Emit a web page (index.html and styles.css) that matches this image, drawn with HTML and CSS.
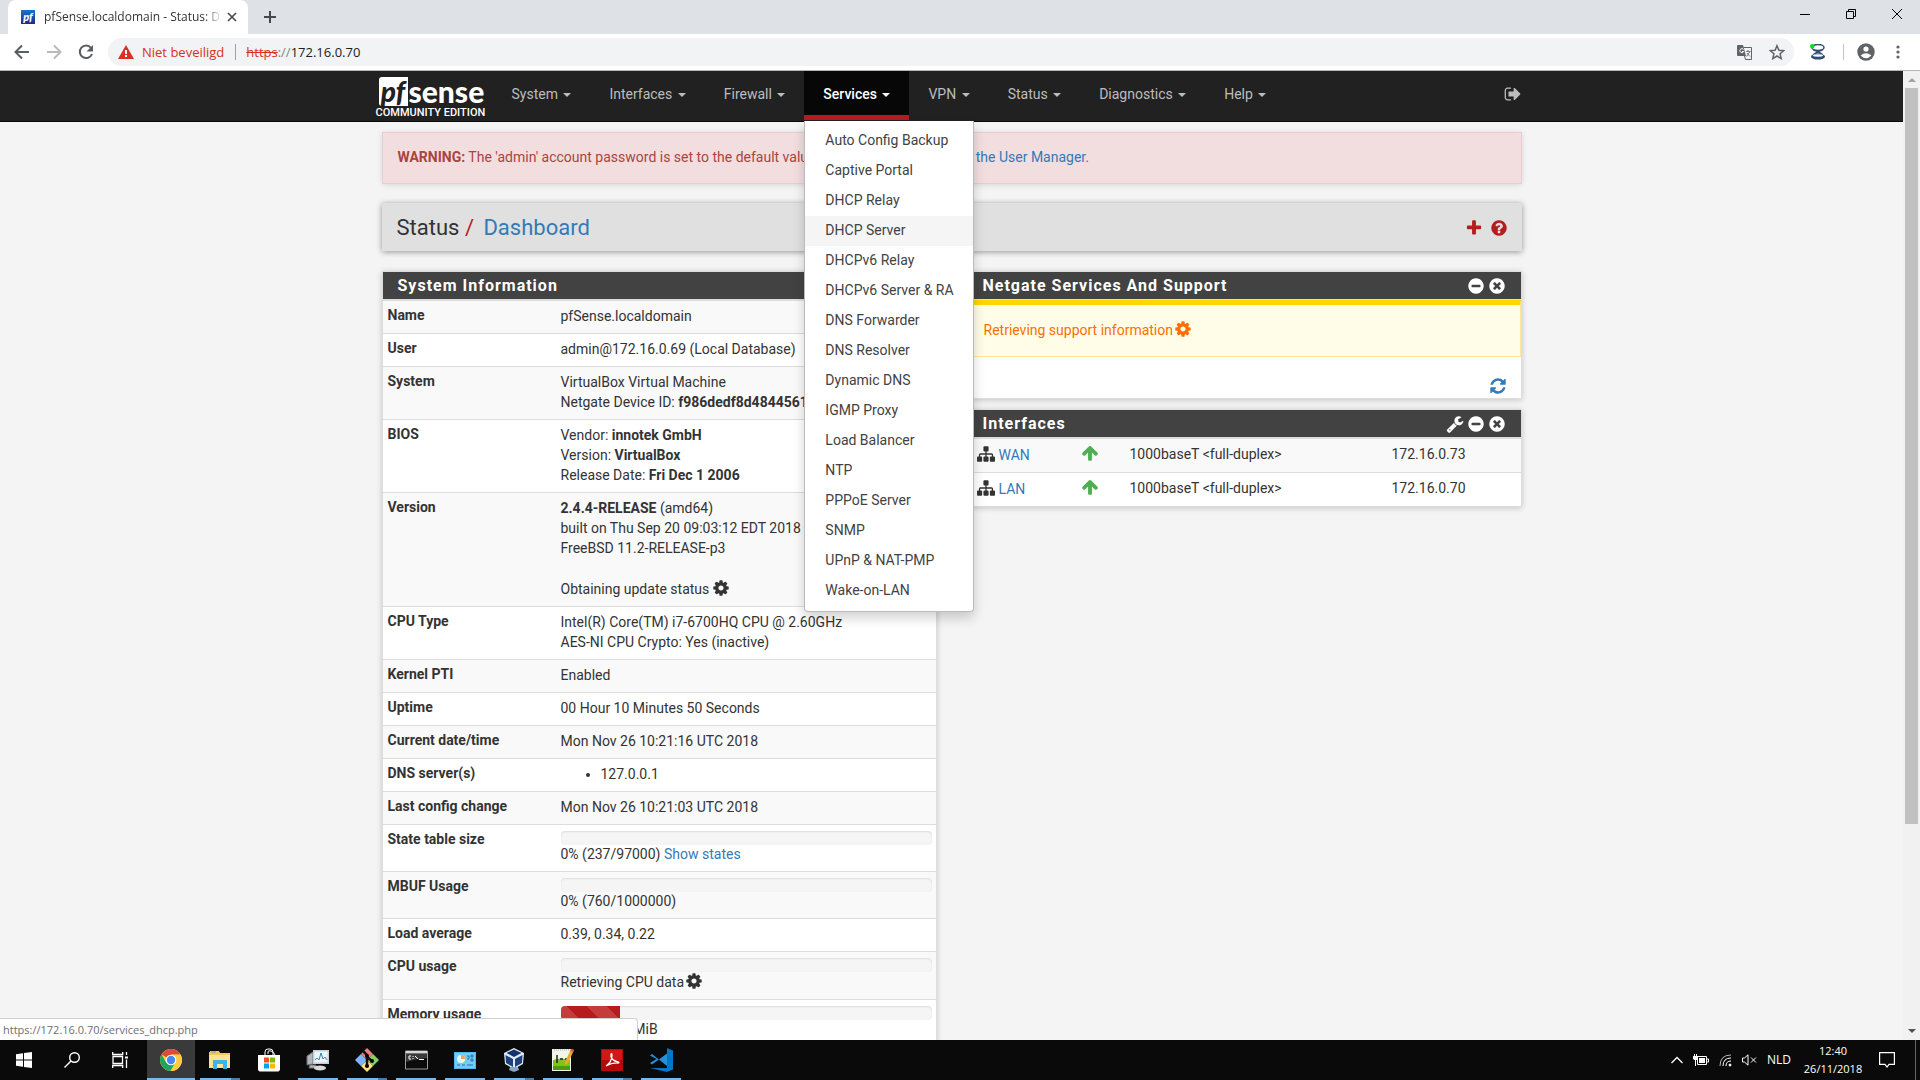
FILE: index.html
```html
<!DOCTYPE html>
<html lang="en">
<head>
<meta charset="utf-8">
<title>pfSense.localdomain - Status: Dashboard</title>
<link rel="stylesheet" href="styles.css">
</head>
<body>
<svg class="sprite" aria-hidden="true">
  <symbol id="cog" viewBox="0 0 1792 1792"><path d="M1152 896q0-106-75-181t-181-75-181 75-75 181 75 181 181 75 181-75 75-181zm512-109v222q0 12-8 23t-20 13l-185 28q-19 54-39 91 35 50 107 138 10 12 10 25t-9 23q-27 37-99 108t-94 71q-12 0-26-9l-138-108q-44 23-91 38-16 136-29 186-7 28-36 28h-222q-14 0-24.5-8.5t-11.5-21.5l-28-184q-49-16-90-37l-141 107q-10 9-25 9-14 0-25-11-126-114-165-168-7-10-7-23 0-12 8-23 15-21 51-66.5t54-70.5q-27-50-41-99l-183-27q-13-2-21-12.5t-8-23.5v-222q0-12 8-23t19-13l186-28q14-46 39-92-40-57-107-138-10-12-10-24 0-10 9-23 26-36 98.5-107.5t94.5-71.5q13 0 26 10l138 107q44-23 91-38 16-136 29-186 7-28 36-28h222q14 0 24.5 8.5t11.5 21.5l28 184q49 16 90 37l142-107q9-9 24-9 13 0 25 10 129 119 165 170 7 8 7 22 0 12-8 23-15 21-51 66.5t-54 70.5q26 50 41 98l183 28q13 2 21 12.5t8 23.5z"/></symbol>
  <symbol id="plus" viewBox="0 0 1792 1792"><path d="M1600 736v192q0 40-28 68t-68 28h-416v416q0 40-28 68t-68 28h-192q-40 0-68-28t-28-68v-416h-416q-40 0-68-28t-28-68v-192q0-40 28-68t68-28h416v-416q0-40 28-68t68-28h192q40 0 68 28t28 68v416h416q40 0 68 28t28 68z"/></symbol>
  <symbol id="question" viewBox="0 0 1792 1792"><path d="M1024 1376v-192q0-14-9-23t-23-9h-192q-14 0-23 9t-9 23v192q0 14 9 23t23 9h192q14 0 23-9t9-23zm256-672q0-88-55.5-163t-138.5-116-170-41q-243 0-371 213-15 24 8 42l132 100q7 6 19 6 16 0 25-12 53-68 86-92 34-24 86-24 48 0 85.5 26t37.5 59q0 38-20 61t-68 45q-63 28-115.5 86.5t-52.5 125.5v36q0 14 9 23t23 9h192q14 0 23-9t9-23q0-19 21.5-49.5t54.5-49.5q32-18 49-28.5t46-35 44.5-48 28-60.5 12.5-81zm384 192q0 209-103 385.5t-279.5 279.5-385.5 103-385.5-103-279.5-279.5-103-385.5 103-385.5 279.5-279.5 385.5-103 385.5 103 279.5 279.5 103 385.5z"/></symbol>
  <symbol id="minus" viewBox="0 0 1792 1792"><path d="M1344 960v-128q0-26-19-45t-45-19h-768q-26 0-45 19t-19 45v128q0 26 19 45t45 19h768q26 0 45-19t19-45zm320-64q0 209-103 385.5t-279.5 279.5-385.5 103-385.5-103-279.5-279.5-103-385.5 103-385.5 279.5-279.5 385.5-103 385.5 103 279.5 279.5 103 385.5z"/></symbol>
  <symbol id="times" viewBox="0 0 1792 1792"><path d="M1277 1122q0-26-19-45l-181-181 181-181q19-19 19-45 0-27-19-46l-90-90q-19-18-46-18-26 0-45 18l-181 181-181-181q-19-18-45-18-27 0-46 18l-90 90q-19 19-19 46 0 26 19 45l181 181-181 181q-19 19-19 45 0 27 19 46l90 90q19 18 46 18 26 0 45-18l181-181 181 181q19 18 45 18 27 0 46-18l90-90q19-19 19-46zm387-226q0 209-103 385.5t-279.5 279.5-385.5 103-385.5-103-279.5-279.5-103-385.5 103-385.5 279.5-279.5 385.5-103 385.5 103 279.5 279.5 103 385.5z"/></symbol>
  <symbol id="wrench" viewBox="0 0 1792 1792"><path d="M448 1472q0-26-19-45t-45-19-45 19-19 45 19 45 45 19 45-19 19-45zm644-420l-682 682q-37 37-90 37-52 0-91-37l-106-108q-38-36-38-90 0-53 38-91l681-681q39 98 114.5 173.5t173.5 114.5zm634-435q0 39-23 106-47 134-164.5 217.5t-258.5 83.5q-185 0-316.5-131.5t-131.5-316.5 131.5-316.5 316.5-131.5q58 0 121.5 16.5t107.5 46.5q16 11 16 28t-16 28l-293 169v224l193 107q5-3 79-48.5t135.5-81 70.5-35.5q15 0 23.5 10t8.5 25z"/></symbol>
  <symbol id="refresh" viewBox="0 0 1792 1792"><path d="M1639 1056q0 5-1 7-64 268-268 434.5t-478 166.5q-146 0-282.5-55t-243.5-157l-129 129q-19 19-45 19t-45-19-19-45v-448q0-26 19-45t45-19h448q26 0 45 19t19 45-19 45l-137 137q71 66 161 102t187 36q134 0 250-65t186-179q11-17 53-117 8-23 30-23h192q13 0 22.5 9.5t9.5 22.5zm25-800v448q0 26-19 45t-45 19h-448q-26 0-45-19t-19-45 19-45l138-138q-148-137-349-137-134 0-250 65t-186 179q-11 17-53 117-8 23-30 23h-199q-13 0-22.5-9.5t-9.5-22.5v-7q65-268 270-434.5t480-166.5q146 0 284 55.5t245 156.5l130-129q19-19 45-19t45 19 19 45z"/></symbol>
  <symbol id="arrow-up" viewBox="0 0 1792 1792"><path d="M1675 971q0 51-37 90l-75 75q-38 38-91 38-54 0-90-38l-294-293v704q0 52-37.5 84.5t-90.5 32.5h-128q-53 0-90.5-32.5t-37.5-84.5v-704l-294 293q-36 38-90 38t-90-38l-75-75q-38-38-38-90 0-53 38-91l651-651q35-37 90-37 54 0 91 37l651 651q37 39 37 91z"/></symbol>
  <symbol id="sitemap" viewBox="0 0 1792 1792"><path d="M1792 1248v320q0 40-28 68t-68 28h-320q-40 0-68-28t-28-68v-320q0-40 28-68t68-28h96v-192h-512v192h96q40 0 68 28t28 68v320q0 40-28 68t-68 28h-320q-40 0-68-28t-28-68v-320q0-40 28-68t68-28h96v-192h-512v192h96q40 0 68 28t28 68v320q0 40-28 68t-68 28h-320q-40 0-68-28t-28-68v-320q0-40 28-68t68-28h96v-192q0-52 38-90t90-38h512v-192h-96q-40 0-68-28t-28-68v-320q0-40 28-68t68-28h320q40 0 68 28t28 68v320q0 40-28 68t-68 28h-96v192h512q52 0 90 38t38 90v192h96q40 0 68 28t28 68z"/></symbol>
  <symbol id="sign-out" viewBox="0 0 1792 1792"><path d="M704 1440q0 4 1 20t.5 26.5-3 23.5-10 19.5-20.5 6.5h-320q-119 0-203.5-84.5t-84.5-203.5v-704q0-119 84.5-203.5t203.5-84.5h320q13 0 22.5 9.5t9.5 22.5q0 4 1 20t.5 26.5-3 23.5-10 19.5-20.5 6.5h-320q-66 0-113 47t-47 113v704q0 66 47 113t113 47h312l11.5 1 11.5 3 8 5.5 7 9 2 13.5zm928-544q0 26-19 45l-544 544q-19 19-45 19t-45-19-19-45v-288h-448q-26 0-45-19t-19-45v-384q0-26 19-45t45-19h448v-288q0-26 19-45t45-19 45 19l544 544q19 19 19 45z"/></symbol>
</svg>

<header class="browser">
  <div class="tabstrip">
    <div class="tab">
      <span class="favicon">pf</span>
      <span class="tab-title">pfSense.localdomain - Status: Dashboard</span>
      <button class="ghost" aria-label="Close tab"><svg width="10" height="10" viewBox="0 0 10 10"><path d="M1 1l8 8M9 1l-8 8" stroke="#45494d" stroke-width="1.600"/></svg></button>
    </div>
    <button class="ghost new-tab" aria-label="New tab"><svg width="12" height="12" viewBox="0 0 12 12"><path d="M6 0v12M0 6h12" stroke="#45494d" stroke-width="2"/></svg></button>
    <div class="window-buttons">
      <button class="ghost" aria-label="Minimize"><svg width="10" height="10" viewBox="0 0 10 10"><path d="M0 5.500h10" stroke="#000"/></svg></button>
      <button class="ghost" aria-label="Restore"><svg width="10" height="10" viewBox="0 0 10 10"><path d="M.5 2.500h7v7h-7zM2.500 2.500v-2h7v7h-2" fill="none" stroke="#000"/></svg></button>
      <button class="ghost" aria-label="Close"><svg width="10" height="10" viewBox="0 0 10 10"><path d="M0 0l10 10M10 0L0 10" stroke="#000"/></svg></button>
    </div>
  </div>
  <div class="toolbar">
    <div class="nav-buttons">
      <button class="ghost" aria-label="Back"><svg width="16" height="16" viewBox="0 0 16 16" fill="none" stroke="#5a5e63" stroke-width="2"><path d="M15 8H2M8 1.500L1.500 8 8 14.500"/></svg></button>
      <button class="ghost" aria-label="Forward"><svg width="16" height="16" viewBox="0 0 16 16" fill="none" stroke="#bababc" stroke-width="2"><path d="M1 8h13M8 1.500L14.500 8 8 14.500"/></svg></button>
      <button class="ghost" aria-label="Reload"><svg width="16" height="16" viewBox="0 0 16 16"><path d="M13 3.800A6.300 6.300 0 1 0 14 10" fill="none" stroke="#5a5e63" stroke-width="2"/><path d="M15 1v6.500H8.500z" fill="#5a5e63"/></svg></button>
    </div>
    <div class="omnibox">
      <svg width="16" height="14" viewBox="0 0 16 14"><path d="M8 0l8 14H0z" fill="#d93025"/><path d="M8 5v4M8 10v2" stroke="#fff" stroke-width="2"/></svg>
      <span class="insecure">Niet beveiligd</span>
      <span class="url"><s>https</s><span class="slashes">://</span>172.16.0.70</span>
      <svg class="translate" width="15" height="15" viewBox="0 0 15 15"><path d="M0 1q0-1 1-1h5l3 11H1q-1 0-1-1z" fill="#5f6368"/><path d="M6.500 2.500h8v12h-6l-1-3.500" fill="none" stroke="#5f6368"/><path d="M6.500 4.500a2 2 0 1 0 .2 2H5" fill="none" stroke="#fff"/><path d="M9 6.500h4.500M11 5v1.500M9.500 11.500l3.500-5M10 8l3 3.500" stroke="#777b80" fill="none"/></svg>
      <svg width="16" height="16" viewBox="0 0 16 16"><path d="M8 1.700l1.900 4.500 4.900.4-3.700 3.200 1.100 4.800L8 12l-4.200 2.600 1.100-4.800L1.200 6.600l4.900-.4z" fill="none" stroke="#5f6368" stroke-width="1.500"/></svg>
    </div>
    <svg width="16" height="16" viewBox="0 0 16 16"><ellipse cx="8" cy="3.500" rx="6" ry="3" fill="#fff" stroke="#2d4c70" stroke-width="1.500"/><path d="M3.500 6q4.500 2 9 0M3.500 10.500q4.500-4 9 0M6 8.300h4" fill="none" stroke="#2d4c70" stroke-width="1.500"/><ellipse cx="8" cy="12.600" rx="7" ry="3" fill="#2d4c70"/><ellipse cx="8" cy="11.500" rx="5" ry="1.200" fill="#fff"/><circle cx="2.200" cy="2.200" r="2.200" fill="#0bdc1c"/></svg>
    <span class="divider"></span>
    <svg width="18" height="18" viewBox="0 0 18 18"><circle cx="9" cy="9" r="8.700" fill="#5f6368"/><circle cx="9" cy="6" r="2.600" fill="#fff"/><path d="M3.600 12.500Q9 8 14.400 12.500 9 18 3.600 12.500" fill="#fff"/></svg>
    <button class="ghost menu-dots" aria-label="Menu"><svg width="4" height="14" viewBox="0 0 4 14" fill="#5f6368"><circle cx="2" cy="2" r="1.600"/><circle cx="2" cy="7" r="1.600"/><circle cx="2" cy="12" r="1.600"/></svg></button>
  </div>
</header>

<div class="viewport">
  <div class="page">
    <nav class="navbar">
      <div class="container navbar-inner">
        <a class="brand" href="#"><span class="brand-name"><span class="brand-pf">pf</span><span class="brand-sense">sense</span></span><span class="brand-edition">COMMUNITY EDITION</span></a>
        <ul class="menu">
          <li><a href="#">System <i class="caret"></i></a></li>
          <li><a href="#">Interfaces <i class="caret"></i></a></li>
          <li><a href="#">Firewall <i class="caret"></i></a></li>
          <li class="open"><a href="#">Services <i class="caret"></i></a>
            <ul class="dropdown">
              <li><a href="#">Auto Config Backup</a></li>
              <li><a href="#">Captive Portal</a></li>
              <li><a href="#">DHCP Relay</a></li>
              <li class="hovered"><a href="#">DHCP Server</a></li>
              <li><a href="#">DHCPv6 Relay</a></li>
              <li><a href="#">DHCPv6 Server &amp; RA</a></li>
              <li><a href="#">DNS Forwarder</a></li>
              <li><a href="#">DNS Resolver</a></li>
              <li><a href="#">Dynamic DNS</a></li>
              <li><a href="#">IGMP Proxy</a></li>
              <li><a href="#">Load Balancer</a></li>
              <li><a href="#">NTP</a></li>
              <li><a href="#">PPPoE Server</a></li>
              <li><a href="#">SNMP</a></li>
              <li><a href="#">UPnP &amp; NAT-PMP</a></li>
              <li><a href="#">Wake-on-LAN</a></li>
            </ul>
          </li>
          <li><a href="#">VPN <i class="caret"></i></a></li>
          <li><a href="#">Status <i class="caret"></i></a></li>
          <li><a href="#">Diagnostics <i class="caret"></i></a></li>
          <li><a href="#">Help <i class="caret"></i></a></li>
        </ul>
        <a class="logout" href="#" aria-label="Logout"><svg class="icon"><use href="#sign-out"/></svg></a>
      </div>
    </nav>

    <main class="container">
      <div class="alert"><strong>WARNING:</strong> The 'admin' account password is set to the default value. <a href="#">Change the password in the User Manager.</a></div>
      <div class="page-header">
        <h1>Status <span class="slash">/</span> <a href="#">Dashboard</a></h1>
        <div class="header-icons">
          <a href="#" aria-label="Add widget"><svg class="icon"><use href="#plus"/></svg></a>
          <a href="#" aria-label="Help"><svg class="icon"><use href="#question"/></svg></a>
        </div>
      </div>

      <div class="columns">
        <section class="panel">
          <div class="panel-heading"><h2>System Information</h2></div>
          <table class="info">
            <tr><th scope="row">Name</th><td>pfSense.localdomain</td></tr>
            <tr><th scope="row">User</th><td>admin@172.16.0.69 (Local Database)</td></tr>
            <tr><th scope="row">System</th><td>VirtualBox Virtual Machine<br>Netgate Device ID: <strong>f986dedf8d4844561</strong></td></tr>
            <tr><th scope="row">BIOS</th><td>Vendor: <strong>innotek GmbH</strong><br>Version: <strong>VirtualBox</strong><br>Release Date: <strong>Fri Dec 1 2006</strong></td></tr>
            <tr><th scope="row">Version</th><td><strong>2.4.4-RELEASE</strong> (amd64)<br>built on Thu Sep 20 09:03:12 EDT 2018<br>FreeBSD 11.2-RELEASE-p3<br><br><span class="busy">Obtaining update status <svg class="icon"><use href="#cog"/></svg></span></td></tr>
            <tr><th scope="row">CPU Type</th><td>Intel(R) Core(TM) i7-6700HQ CPU @ 2.60GHz<br>AES-NI CPU Crypto: Yes (inactive)</td></tr>
            <tr><th scope="row">Kernel PTI</th><td>Enabled</td></tr>
            <tr><th scope="row">Uptime</th><td>00 Hour 10 Minutes 50 Seconds</td></tr>
            <tr><th scope="row">Current date/time</th><td>Mon Nov 26 10:21:16 UTC 2018</td></tr>
            <tr><th scope="row">DNS server(s)</th><td><ul><li>127.0.0.1</li></ul></td></tr>
            <tr><th scope="row">Last config change</th><td>Mon Nov 26 10:21:03 UTC 2018</td></tr>
            <tr><th scope="row">State table size</th><td><div class="progress"></div>0% (237/97000) <a href="#">Show states</a></td></tr>
            <tr><th scope="row">MBUF Usage</th><td><div class="progress"></div>0% (760/1000000)</td></tr>
            <tr><th scope="row">Load average</th><td>0.39, 0.34, 0.22</td></tr>
            <tr><th scope="row">CPU usage</th><td><div class="progress"></div><span class="busy tight">Retrieving CPU data<svg class="icon"><use href="#cog"/></svg></span></td></tr>
            <tr><th scope="row">Memory usage</th><td><div class="progress"><div class="bar" style="width:16%"></div></div>16% of 981 MiB</td></tr>
          </table>
        </section>

        <div class="stack">
          <section class="panel">
            <div class="panel-heading"><h2>Netgate Services And Support</h2>
              <a href="#" aria-label="Collapse"><svg class="icon"><use href="#minus"/></svg></a>
              <a href="#" aria-label="Close"><svg class="icon"><use href="#times"/></svg></a>
            </div>
            <div class="support">Retrieving support information<svg class="icon"><use href="#cog"/></svg></div>
            <div class="panel-foot"><a href="#" aria-label="Refresh"><svg class="icon"><use href="#refresh"/></svg></a></div>
          </section>
          <section class="panel">
            <div class="panel-heading"><h2>Interfaces</h2>
              <a href="#" aria-label="Settings"><svg class="icon"><use href="#wrench"/></svg></a>
              <a href="#" aria-label="Collapse"><svg class="icon"><use href="#minus"/></svg></a>
              <a href="#" aria-label="Close"><svg class="icon"><use href="#times"/></svg></a>
            </div>
            <table class="ifaces">
              <tr><td><span class="if-name"><svg class="icon"><use href="#sitemap"/></svg><a href="#">WAN</a></span></td><td><svg class="icon up"><use href="#arrow-up"/></svg></td><td>1000baseT &lt;full-duplex&gt;</td><td>172.16.0.73</td></tr>
              <tr><td><span class="if-name"><svg class="icon"><use href="#sitemap"/></svg><a href="#">LAN</a></span></td><td><svg class="icon up"><use href="#arrow-up"/></svg></td><td>1000baseT &lt;full-duplex&gt;</td><td>172.16.0.70</td></tr>
            </table>
          </section>
        </div>
      </div>
    </main>
  </div>
  <div class="scrollbar"><i class="arrow arrow-top"></i><i class="thumb"></i><i class="arrow arrow-bottom"></i></div>
  <div class="status-bubble">https://172.16.0.70/services_dhcp.php</div>
</div>

<footer class="taskbar">
  <div class="starts">
    <button class="ghost" aria-label="Start"><svg width="16" height="16" viewBox="0 0 16 16" fill="#fff"><path d="M0 2.300l7-1V7.500H0zM8 1.100L16 0v7.500H8zM0 8.500h7v6.200l-7-1zM8 8.500h8V16l-8-1.100z"/></svg></button>
    <button class="ghost" aria-label="Search"><svg width="16" height="16" viewBox="0 0 16 16" fill="none" stroke="#fff" stroke-width="1.400"><circle cx="10.500" cy="5.500" r="4.800"/><path d="M7 9L.5 15.500"/></svg></button>
    <button class="ghost" aria-label="Task view"><svg width="16" height="16" viewBox="0 0 16 16" fill="none" stroke="#fff" stroke-width="1.300"><path d="M1 4.500h9.500v7H1zM.7 0v2.500h10V0M.7 16v-2.500h10V16M14.500 0v3M14.500 7.500V16"/><path d="M13 4.500h3v2h-3z" fill="#fff" stroke="none"/></svg></button>
  </div>
  <div class="apps">
    <button class="ghost app active multi" aria-label="Google Chrome"><svg width="24" height="24" viewBox="0 0 24 24"><circle cx="12" cy="12" r="11" fill="#ffcd40"/><path d="M12 12L2.500 6.500A11 11 0 0 1 21.500 6.500H12z" fill="#de4b3c"/><path d="M2.500 6.500A11 11 0 0 0 11.500 23l5-8.500-4.500-2.500-4.800 2.700z" fill="#1ea362"/><path d="M12 6.700h9.600A11 11 0 0 1 11.500 23l5-8.500z" fill="#ffcd40"/><circle cx="12" cy="12" r="5.300" fill="#fff"/><circle cx="12" cy="12" r="4.200" fill="#4688f4"/></svg></button>
    <button class="ghost app running multi" aria-label="File Explorer"><svg width="22" height="20" viewBox="0 0 22 20"><path d="M0 2h1V1h9l1 2h10v15H0z" fill="#f0c95c"/><path d="M0 5h21v13H0z" fill="#ffe292"/><path d="M2 2h5" stroke="#5fa8d8"/><path d="M4 19v-9h14v9h-4v-5H8v5z" fill="#3ab5e9"/></svg></button>
    <button class="ghost app" aria-label="Microsoft Store"><svg width="24" height="24" viewBox="0 0 24 24"><path d="M1 7h22v15l-1.500 1.500h-19L1 22z" fill="#fff"/><path d="M8 7V4q0-3 3-3h2q3 0 3 3v3M11 6V4q0-2 3-1t4 4" fill="none" stroke="#fff"/><path d="M7 9.500h5v5H7z" fill="#f25022"/><path d="M13 9.500h5v5h-5z" fill="#7fba00"/><path d="M7 15.500h5v5H7z" fill="#00a4ef"/><path d="M13 15.500h5v5h-5z" fill="#ffb900"/></svg></button>
    <button class="ghost app running" aria-label="System Monitor"><svg width="24" height="24" viewBox="0 0 24 24"><path d="M1 8l6-4v12l-6 1zM4 17h6v3H3z" fill="#b4b7b8" stroke="#6c7072"/><path d="M7 2h16v14H7z" fill="#c9cdcf"/><path d="M8.500 3.500h13v11h-13z" fill="#e9f6fc"/><path d="M9 12l2-2 2 2 2-7 2 6 2-2 2 3" fill="none" stroke="#2886bd"/><ellipse cx="14" cy="20" rx="6" ry="2.500" fill="#d7d9da"/></svg></button>
    <button class="ghost app running multi" aria-label="Git"><svg width="24" height="24" viewBox="0 0 24 24"><path d="M12 0l6 6-6 6-6-6z" fill="#f07d7d"/><path d="M6 6l6 6-6 6-6-6z" fill="#80b3ff"/><path d="M18 6l6 6-6 6-6-6z" fill="#87d063"/><path d="M12 12l6 6-6 6-6-6z" fill="#ffe27d"/><path d="M8 3l4 4v12M12 9l5 4" fill="none" stroke="#111" stroke-width="2.500"/><circle cx="12" cy="8" r="2"/><circle cx="12" cy="18" r="2"/><circle cx="17" cy="13" r="2"/></svg></button>
    <button class="ghost app running" aria-label="Command Prompt"><svg width="23" height="20" viewBox="0 0 23 20"><path d="M.5 1h22v18H.5z" fill="#0b0b0b" stroke="#9b9b9b"/><path d="M1 1h21v2.500H1z" fill="#d8d8d8"/><path d="M1 12q10-3 21-4V4H1z" fill="#3b3b3b"/><path d="M6 6H4v3h2M8 6v1M8 8v1M10 6l3 3M14 9.500h5" fill="none" stroke="#fff"/></svg></button>
    <button class="ghost app running" aria-label="Control Panel"><svg width="22" height="17" viewBox="0 0 22 17"><path d="M0 0h22v17H0z" fill="#4fb7ec"/><path d="M1 1h20v15H1z" fill="#76cbf5"/><circle cx="7" cy="7" r="4" fill="#e8f7ff"/><path d="M7 7V3a4 4 0 0 1 4 4z" fill="#f8a23c"/><path d="M13 4h2v3h-2M17 3h2v2h-2zM17 7h2v2h-2zM3 13h3M8 13h3M13 13h6" fill="none" stroke="#1c75b0"/></svg></button>
    <button class="ghost app running multi" aria-label="VirtualBox"><svg width="20" height="24" viewBox="0 0 20 24"><path d="M10 0l10 5-1 11-9 5-9-5L0 5z" fill="#e4edf8"/><path d="M2.500 5L10 1.500 17.500 5 10 9z" fill="#12336f"/><path d="M1.500 7L9 11v8l-7-4zM18.500 7L11 11v8l7-4z" fill="#1b427c"/><path d="M6 19h8l1 3-5 2-5-2z" fill="#8da3c4"/></svg></button>
    <button class="ghost app running" aria-label="Notepad++"><svg width="22" height="24" viewBox="0 0 22 24"><path d="M0 1h19v22H0z" fill="#f2f5ec"/><path d="M1 12q8-3 17 0v10H1z" fill="#7fc31c"/><path d="M1 18h17v4H1z" fill="#4f9b10"/><path d="M5 7v8M8 11h3M13 11h3" stroke="#222" stroke-width="1.500"/><path d="M2 2h15" stroke="#aaa" stroke-dasharray="1 1"/><path d="M22 2l-3-1-6 13v3l3-2z" fill="#f2a928"/><path d="M22 2l-3-1-1 2 3 1z" fill="#d8574e"/></svg></button>
    <button class="ghost app running multi" aria-label="Acrobat Reader"><svg width="22" height="22" viewBox="0 0 22 22"><path d="M0 0h22v22H0z" fill="#b30b0b"/><path d="M1 1h20v10H1z" fill="#d61515"/><path d="M5 17q6-4 6-11 0-2-1-1-1 6 7 8 2 .5 0 1-6-.5-12 3z" fill="none" stroke="#fff" stroke-width="1.300"/></svg></button>
    <button class="ghost app running" aria-label="Visual Studio Code"><svg width="24" height="24" viewBox="0 0 24 24"><path d="M18 0l6 2.500v19L18 24 1 20h17z" fill="#0076c6"/><path d="M1 7.500l2-1.500 15 12V5.500L3 16.500 1 15l6.500-4z" fill="#2191dc"/></svg></button>
  </div>
  <div class="tray">
    <svg width="12" height="8" viewBox="0 0 12 8"><path d="M.5 7L6 1.500 11.500 7" fill="none" stroke="#fff" stroke-width="1.300"/></svg>
    <svg width="16" height="12" viewBox="0 0 16 12"><path d="M4.500 2.500h9v8h-9zM14 5h1.500v3H14" fill="none" stroke="#fff"/><path d="M6 4h6v5H6zM0 2h5v3L3.500 6h-2L0 5zM1 0h1v2H1zM3 0h1v2H3zM2 6h1v6H2z" fill="#fff"/></svg>
    <svg width="13" height="13" viewBox="0 0 13 13" fill="none" stroke="#fff"><path d="M1 12Q1 1 12 1" opacity=".7"/><path d="M4 12Q4 4 12 4M7 12Q7 7 12 7"/><circle cx="11" cy="11" r="1" fill="#fff"/></svg>
    <svg width="15" height="12" viewBox="0 0 15 12" fill="none" stroke="#fff"><path d="M.5 4h2L6 .8v10.400L2.500 8h-2zM9 3.500l5 5M14 3.500l-5 5"/></svg>
    <span class="lang">NLD</span>
    <div class="clock"><span>12:40</span><span>26/11/2018</span></div>
    <svg width="16" height="16" viewBox="0 0 16 16"><path d="M.6.6h14.800v11.800H10L8 15l-2-2.600H.6z" fill="none" stroke="#fff" stroke-width="1.200"/></svg>
    <span class="peek"></span>
  </div>
</footer>
</body>
</html>
```

FILE: styles.css
```css
* { box-sizing: border-box; }

body {
  margin: 0;
  height: 100vh;
  display: flex;
  flex-direction: column;
  overflow: hidden;
  font: 14px/20px Roboto, sans-serif;
  color: #333;
  background: #f4f4f4;
}

a { color: #337ab7; text-decoration: none; }
ul { margin: 0; padding: 0; }
svg { flex: none; display: block; }

.sprite { position: absolute; width: 0; height: 0; }

.icon { width: 18px; height: 18px; fill: currentColor; }

.ghost {
  display: flex;
  align-items: center;
  justify-content: center;
  padding: 0;
  border: 0;
  background: none;
}

/* Browser frame */
.browser, .status-bubble, .taskbar { font-family: "Open Sans", "Noto Sans", sans-serif; }

.tabstrip {
  display: flex;
  height: 34px;
  padding-left: 8px;
  background: #dee1e6;
}

.tab {
  display: flex;
  align-items: center;
  width: 240px;
  padding: 0 11px 0 13px;
  border-radius: 8px 8px 0 0;
  background: #fff;
  font-size: 12px;
}

.favicon {
  width: 14px;
  height: 14px;
  margin-right: 9px;
  background: linear-gradient(#1475cf, #212a86);
  color: #fff;
  font: italic 900 11px/13px Lato, sans-serif;
  text-align: center;
}

.tab-title {
  flex: 1;
  overflow: hidden;
  white-space: nowrap;
  -webkit-mask-image: linear-gradient(90deg, #000 160px, transparent 178px);
  mask-image: linear-gradient(90deg, #000 160px, transparent 178px);
}

.new-tab { width: 28px; margin-left: 8px; }

.window-buttons { display: flex; height: 28px; margin-left: auto; }
.window-buttons .ghost { width: 46px; }

.toolbar {
  display: flex;
  align-items: center;
  height: 37px;
  padding-left: 6px;
  border-bottom: 1px solid #b5b5b5;
  background: #fff;
}

.nav-buttons { display: flex; width: 102px; }
.nav-buttons .ghost { width: 32px; height: 28px; }

.omnibox {
  flex: 1;
  display: flex;
  align-items: center;
  height: 28px;
  margin-right: 16px;
  padding: 0 9px 0 10px;
  border-radius: 14px;
  background: #f1f3f4;
  font-size: 13px;
  color: #202124;
}

.insecure {
  margin-left: 8px;
  padding-right: 11px;
  border-right: 1px solid #9aa0a6;
  line-height: 16px;
  color: #d93025;
}

.url { margin: 0 auto 0 10px; }
.url s { color: #d93025; }
.slashes { color: #80868b; }
.translate { margin-right: 17px; }
.divider { width: 1px; height: 16px; margin: 0 13px 0 17px; background: #c4c4c6; }
.menu-dots { width: 45px; }

/* Page area */
.viewport {
  position: relative;
  flex: 1;
  min-height: 0;
  display: flex;
  overflow: hidden;
}

.page { flex: 1; min-width: 0; overflow: hidden; }

.container {
  width: 1140px;
  max-width: 100%;
  margin: 0 auto;
}

.navbar { height: 51px; border-bottom: 1px solid #080808; background: #212121; }
.navbar-inner { display: flex; height: 50px; }

.brand {
  width: 110px;
  margin-left: -6px;
  padding-top: 6px;
  color: #fff;
}

.brand-name { display: flex; padding-left: 3px; }

.brand-pf {
  width: 29px;
  height: 29px;
  border-radius: 3px 0 0 3px;
  background: #fff;
  color: #212121;
  font: italic 900 28px/28px Lato, sans-serif;
  text-align: center;
}

.brand-sense { font: 900 30px/28px Lato, sans-serif; margin-left: 1px; }

.brand-edition { display: block; font-size: 11px; line-height: 14px; font-weight: 500; white-space: nowrap; }

.menu { display: flex; margin-left: 7px; list-style: none; }
.menu > li { position: relative; }

.menu > li > a {
  display: block;
  height: 49px;
  padding: 13px 19px;
  color: #bdbdbd;
}

.menu > .open > a {
  border-bottom: 5px solid #b71c1c;
  background: #070707;
  color: #fff;
  font-weight: 500;
}

.caret {
  display: inline-block;
  margin-left: 2px;
  vertical-align: middle;
  border-top: 4px solid;
  border-left: 4px solid transparent;
  border-right: 4px solid transparent;
}

.dropdown {
  position: absolute;
  top: 50px;
  left: 0;
  z-index: 2;
  width: 170px;
  padding: 5px 0;
  border: 1px solid #bbb;
  border-top: 0;
  border-radius: 0 0 4px 4px;
  background: #fff;
  box-shadow: 0 6px 12px rgba(0, 0, 0, .18);
  list-style: none;
}

.dropdown a { display: block; padding: 4px 20px 6px; color: #424242; white-space: nowrap; }
.dropdown .hovered { background: #f5f5f5; }

.logout { margin-left: auto; padding-top: 14px; color: #bdbdbd; }

.alert {
  margin: 10px 0 19px;
  padding: 14px 15px 16px;
  border: 1px solid #ebccd1;
  background: #f2dede;
  color: #a94442;
  box-shadow: 0 1px 6px rgba(0, 0, 0, .12);
}

.page-header {
  display: flex;
  align-items: center;
  justify-content: space-between;
  height: 48px;
  margin-bottom: 20px;
  padding: 2px 14px 0 15px;
  background: #e0e0e0;
  box-shadow: 0 1px 6px rgba(0, 0, 0, .4);
}

.page-header h1 { margin: 0; font-size: 22px; font-weight: 400; }
.slash { margin-right: 4px; color: #b71c1c; }
.header-icons { display: flex; gap: 7px; }
.header-icons a { color: #b71c1c; }

.columns { display: grid; grid-template-columns: 555px 555px; justify-content: space-between; align-items: start; }
.stack { display: grid; gap: 10px; }

.panel { border: 1px solid #ddd; background: #fff; box-shadow: 0 1px 6px rgba(0, 0, 0, .2); }

.panel-heading {
  display: flex;
  align-items: center;
  gap: 3px;
  height: 28px;
  padding: 0 15px;
  border-bottom: 1px solid #ddd;
  background: #424242;
}

.panel-heading h2 { flex: 1; margin: 0; font-size: 16px; font-weight: 700; letter-spacing: 1px; color: #fff; }
.panel-heading a { color: #fff; }

table { width: 100%; border-collapse: separate; border-spacing: 0; }
th, td { border-top: 1px solid #ddd; vertical-align: top; text-align: left; }
tr:nth-child(odd) { background: #f9f9f9; }

.info th { width: 173px; padding: 4px 5px; }
.info td { padding: 5px 4px 7px 5px; }
.info ul { padding-left: 40px; }

.busy { display: flex; gap: 3px; margin-bottom: -1px; padding-top: 1px; line-height: 21px; }
.busy.tight { gap: 1px; }

.progress {
  height: 14px;
  margin: 1px 0 -1px;
  overflow: hidden;
  border-radius: 4px;
  background: #f5f5f5;
  box-shadow: inset 0 1px 2px rgba(0, 0, 0, .1);
}

.bar { height: 100%; background: repeating-linear-gradient(45deg, #c43c3c 0 14px, #b71c1c 14px 28px); }

.support {
  display: flex;
  gap: 1px;
  height: 57px;
  padding: 15px;
  border: 1px solid #ffe699;
  border-top: 5px solid #ffd600;
  background: #fffde7;
  color: #ff6f00;
}

.panel-foot { display: flex; justify-content: flex-end; height: 41px; padding: 20px 14px 0; }

.ifaces { table-layout: fixed; }
.ifaces td { height: 34px; padding: 5px 10px 7px; }
.ifaces td:first-child { width: 103px; padding: 6px 9px; }
.ifaces td:nth-child(2) { width: 49px; }
.ifaces td:nth-child(3) { width: 262px; }
.if-name { display: flex; gap: 4px; }
.up { color: #4caf50; }

.scrollbar {
  display: flex;
  flex-direction: column;
  align-items: center;
  width: 17px;
  background: #f1f1f1;
}

.arrow { margin: 7px 0; border: 4px solid transparent; }
.arrow-top { margin-top: 3px; margin-bottom: 6px; border-bottom-color: #a3a3a3; }
.arrow-bottom { margin: auto 0 3px; border-top-color: #505050; }
.thumb { width: 13px; height: 76%; background: #c1c1c1; }

.status-bubble {
  position: absolute;
  left: 0;
  bottom: 0;
  z-index: 3;
  width: 638px;
  padding: 1px 3px 0;
  border: 1px solid #d0d0d0;
  border-width: 1px 1px 0 0;
  border-radius: 0 4px 0 0;
  background: #fff;
  font-size: 11px;
  color: #6b6e73;
}

/* Taskbar */
.taskbar { display: flex; height: 40px; background: #0a0a0a; color: #fff; font-size: 12px; }
.starts { display: flex; width: 147px; }
.starts .ghost { width: 48px; }
.apps { display: flex; gap: 1px; }
.app { width: 48px; }
.running {
  background: linear-gradient(#76b9ed, #76b9ed) center bottom / 40px 2px no-repeat;
}
.active { background: linear-gradient(#76b9ed, #76b9ed) bottom / 100% 2px no-repeat, #3a3a3a; }
.running.multi {
  background: linear-gradient(90deg, #76b9ed 31px, #4c7da3 31px) center bottom / 40px 2px no-repeat;
}
.tray { display: flex; align-items: center; margin-left: auto; gap: 10px; }
.lang { width: 24px; }
.clock { display: flex; flex-direction: column; align-items: center; width: 64px; font-size: 11px; line-height: 18px; }
.clock + svg { margin-left: 4px; }
.peek { width: 5px; height: 40px; margin-left: 10px; border-left: 1px solid #666; }
```
